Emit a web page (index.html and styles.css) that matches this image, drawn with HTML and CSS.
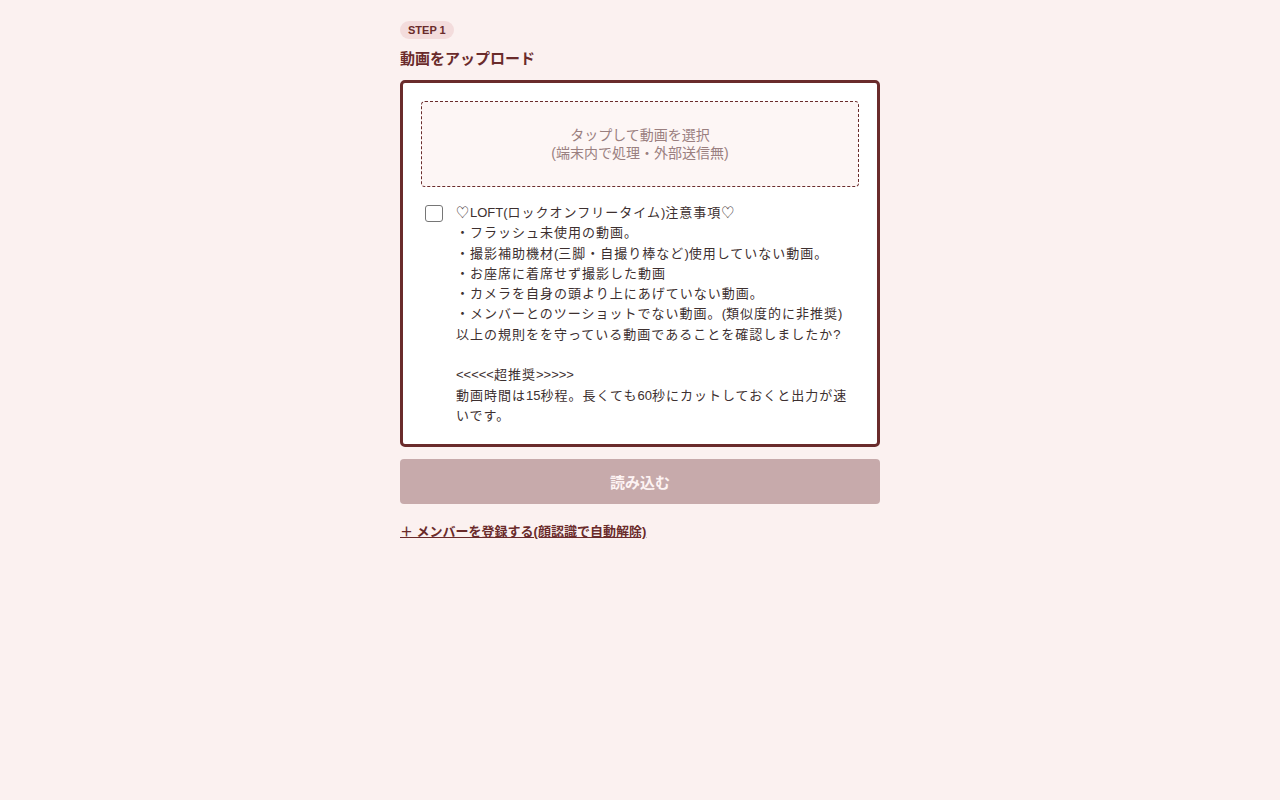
FILE: index.html
```html
<!DOCTYPE html>
<html lang="ja">
<head>
<meta charset="utf-8">
<title>動画をアップロード</title>
<link rel="stylesheet" href="styles.css">
</head>
<body>
<main class="page">
  <span class="step">STEP 1</span>
  <h2 class="title">動画をアップロード</h2>
  <section class="card">
    <div class="drop">
      <div>タップして動画を選択</div>
      <div>(端末内で処理・外部送信無)</div>
    </div>
    <label class="agree">
      <input type="checkbox" class="check">
      <span class="notes">♡<span class="l">LOFT(</span>ロックオンフリータイム<span class="l">)</span>注意事項♡<br>・フラッシュ未使用の動画。<br>・撮影補助機材<span class="l">(</span>三脚・自撮り棒など<span class="l">)</span>使用していない動画。<br>・お座席に着席せず撮影した動画<br>・カメラを自身の頭より上にあげていない動画。<br>・メンバーとのツーショットでない動画。<span class="l">(</span>類似度的に非推奨<span class="l">)</span><br>以上の規則をを守っている動画であることを確認しましたか<span class="l">?</span><br><br><span class="l">&lt;&lt;&lt;&lt;&lt;</span>超推奨<span class="l">&gt;&gt;&gt;&gt;&gt;</span><br>動画時間は<span class="l">15</span>秒程。長くても<span class="l">60</span>秒にカットしておくと出力が速いです。</span>
    </label>
  </section>
  <button class="load" disabled>読み込む</button>
  <a class="member" href="#">＋ メンバーを登録する(顔認識で自動解除)</a>
</main>
</body>
</html>
```

FILE: styles.css
```css
* { box-sizing: border-box; }
html, body { margin: 0; padding: 0; }
body {
  background: #fbf1f0;
  font-family: "Liberation Sans", "Noto Sans CJK JP", sans-serif;
  color: #3d2a2a;
}
.page {
  width: 480px;
  margin: 0 auto;
  padding-top: 21px;
  display: flex;
  flex-direction: column;
  align-items: flex-start;
}
.step {
  display: inline-block;
  background: #f3dcdc;
  color: #6a2b2b;
  font-size: 11px;
  font-weight: 700;
  line-height: 18px;
  padding: 0 8px;
  border-radius: 9px;
}
.title {
  margin: 10px 0 0;
  font-size: 15px;
  font-weight: 700;
  color: #6a2b2b;
  line-height: 20px;
}
.card {
  margin-top: 11px;
  width: 100%;
  background: #fff;
  border: 3px solid #6a2b2b;
  border-radius: 5px;
  padding: 18px;
}
.drop {
  border: 1px dashed #6a2b2b;
  border-radius: 4px;
  background: #fdf6f5;
  height: 86px;
  display: flex;
  flex-direction: column;
  justify-content: center;
  align-items: center;
  font-size: 14px;
  line-height: 18px;
  color: #9a7f7f;
  text-align: center;
}
.agree {
  display: flex;
  gap: 13px;
  margin-top: 16px;
  align-items: flex-start;
}
.check {
  appearance: none;
  -webkit-appearance: none;
  width: 18px;
  height: 17px;
  margin: 2px 0 0 4px;
  border: 1px solid #767676;
  border-radius: 3px;
  background: #fff;
  flex: none;
}
.notes {
  font-size: 13px;
  line-height: 20.3px;
  letter-spacing: 1px;
  color: #3d3030;
}
.notes .l {
  letter-spacing: 0;
}
.load {
  margin-top: 12px;
  width: 100%;
  height: 45px;
  border: none;
  border-radius: 4px;
  background: #c7aaab;
  color: #fdf3f3;
  font-family: inherit;
  font-size: 15px;
  font-weight: 700;
}
.member {
  margin-top: 20px;
  font-size: 13px;
  font-weight: 700;
  color: #6a2b2b;
  text-decoration: underline;
  line-height: 16px;
}
```
